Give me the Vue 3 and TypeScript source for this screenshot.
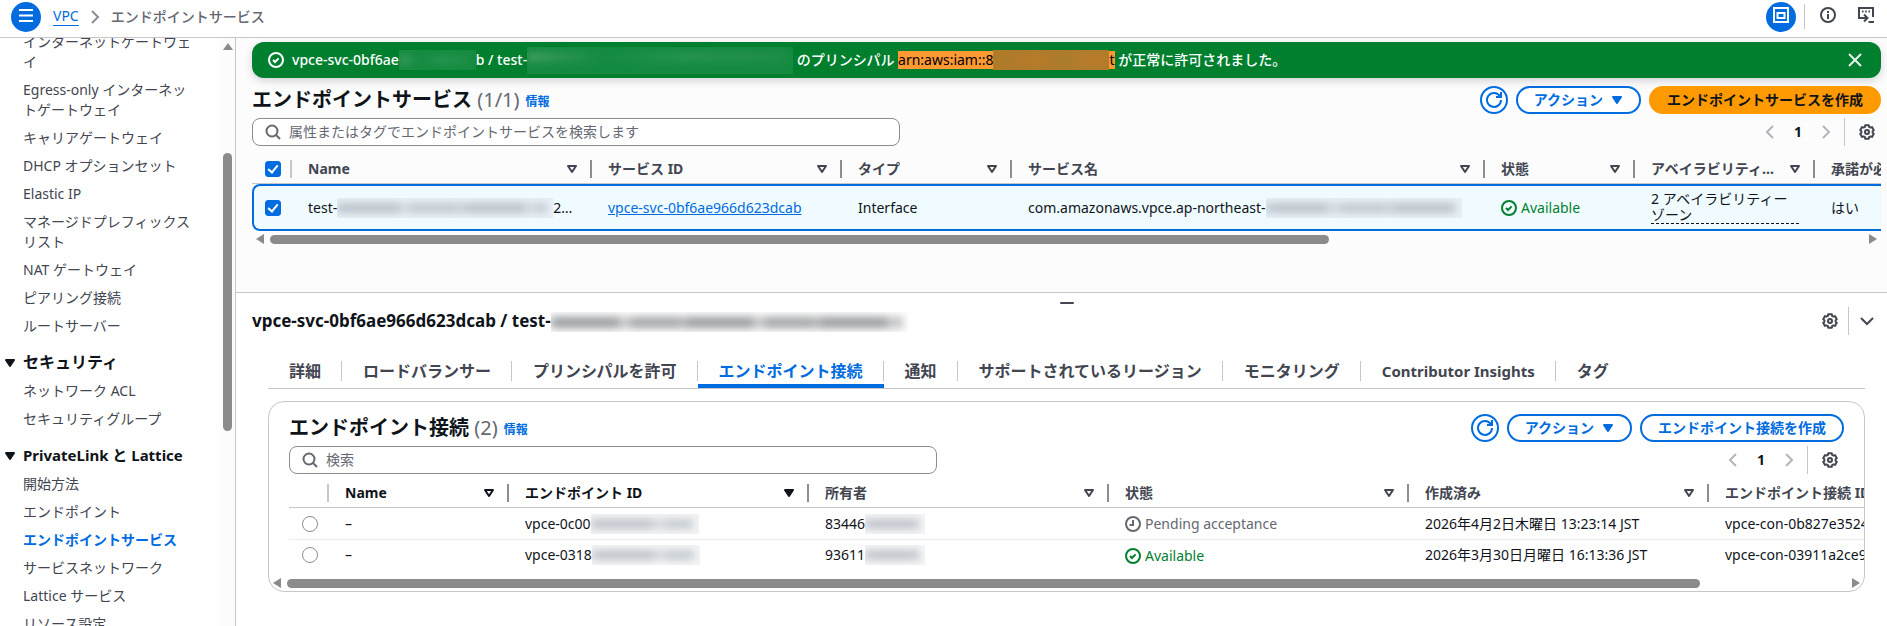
<script setup lang="ts">
import { h, ref } from 'vue'

type Shape = [string, Record<string, string>]

const icons: Record<string, Shape[]> = {
  menu: [['path', { d: 'M1 3h14M1 8.5h14M1 14h14' }]],
  chevronRight: [['path', { d: 'M5 2l6 6-6 6' }]],
  chevronLeft: [['path', { d: 'M11 2L5 8l6 6' }]],
  chevronDown: [['path', { d: 'M2 5l6 6 6-6' }]],
  search: [['circle', { cx: '7', cy: '7', r: '5.5' }], ['path', { d: 'M11 11l4 4' }]],
  check: [['circle', { cx: '8', cy: '8', r: '7' }], ['path', { d: 'M5 8l2 2 3.6-3.6' }]],
  pending: [['circle', { cx: '8', cy: '8', r: '7' }], ['path', { d: 'M8 4v5H4.5' }]],
  close: [['path', { d: 'M2 2l12 12M14 2L2 14' }]],
  refresh: [
    ['path', { d: 'M15 8a7 7 0 1 1-1.2-4' }],
    ['path', { d: 'M10 5h5V0' }],
  ],
  info: [['circle', { cx: '8', cy: '8', r: '7' }], ['path', { d: 'M8 12V7M8 6V4' }]],
  gear: [
    [
      'path',
      {
        'stroke-linejoin': 'round',
        d: 'M6.2 1.2H9.8L10.1 2.8 11.5 3.6 13 3.1 14.8 6.2 13.6 7.2V8.8L14.8 9.8 13 12.9 11.5 12.4 10.1 13.2 9.8 14.8H6.2L5.9 13.2 4.5 12.4 3 12.9 1.2 9.8 2.4 8.8V7.2L1.2 6.2 3 3.1 4.5 3.6 5.9 2.8Z',
      },
    ],
    ['circle', { cx: '8', cy: '8', r: '2' }],
  ],
  panel: [
    ['path', { d: 'M1 1h14v14H1z' }],
    ['path', { d: 'M4.500 6h7v5h-7z' }],
  ],
  shell: [
    ['path', { d: 'M4 11H1V1h14v9' }],
    ['path', { d: 'M4 4.500h1.500M7.200 4.500h1.600M10.500 4.500H12' }],
    ['path', { d: 'M3 11h6M6 7.500L9.500 11 6 14.500' }],
    ['path', { d: 'M10.500 15H16' }],
  ],
  sort: [['path', { d: 'M4 5h8l-4 6z', 'stroke-linejoin': 'round' }]],
  caret: [['path', { d: 'M4 5h8l-4 6z', 'stroke-linejoin': 'round', fill: 'currentColor' }]],
}

const Icon = (props: { name: string }) =>
  h(
    'svg',
    { class: 'icon', viewBox: '0 0 16 16', 'aria-hidden': 'true' },
    icons[props.name].map(([tag, attrs]) => h(tag, attrs)),
  )
Icon.props = ['name']

interface NavGroup {
  title?: string
  items: string[]
}

const nav: NavGroup[] = [
  {
    items: [
      'インターネットゲートウェイ',
      'Egress-only インターネットゲートウェイ',
      'キャリアゲートウェイ',
      'DHCP オプションセット',
      'Elastic IP',
      'マネージドプレフィックスリスト',
      'NAT ゲートウェイ',
      'ピアリング接続',
      'ルートサーバー',
    ],
  },
  { title: 'セキュリティ', items: ['ネットワーク ACL', 'セキュリティグループ'] },
  {
    title: 'PrivateLink と Lattice',
    items: [
      '開始方法',
      'エンドポイント',
      'エンドポイントサービス',
      'サービスネットワーク',
      'Lattice サービス',
      'リソース設定',
    ],
  },
]
const currentNav = 'エンドポイントサービス'

const serviceColumns = ['Name', 'サービス ID', 'タイプ', 'サービス名', '状態', 'アベイラビリティーゾーン', '承諾が必要']
const connectionColumns = ['Name', 'エンドポイント ID', '所有者', '状態', '作成済み', 'エンドポイント接続 ID']

const connections = [
  {
    id: 'vpce-0c00',
    owner: '83446',
    pending: true,
    state: 'Pending acceptance',
    created: '2026年4月2日木曜日 13:23:14 JST',
    connection: 'vpce-con-0b827e3524',
  },
  {
    id: 'vpce-0318',
    owner: '93611',
    pending: false,
    state: 'Available',
    created: '2026年3月30日月曜日 16:13:36 JST',
    connection: 'vpce-con-03911a2ce9',
  },
]

const tabs = [
  '詳細',
  'ロードバランサー',
  'プリンシパルを許可',
  'エンドポイント接続',
  '通知',
  'サポートされているリージョン',
  'モニタリング',
  'Contributor Insights',
  'タグ',
]
const isLatin = (text: string) => /^[A-Za-z]/.test(text)

const activeTab = ref('エンドポイント接続')
const allSelected = ref(true)
const rowSelected = ref(true)
const picked = ref('')
</script>

<template>
  <div class="app">
    <header class="topbar">
      <button class="round" aria-label="メニュー"><Icon name="menu" /></button>
      <nav class="crumbs" aria-label="パンくずリスト">
        <a href="#vpc">VPC</a>
        <Icon name="chevronRight" />
        <span>エンドポイントサービス</span>
      </nav>
      <div class="tools">
        <button class="round" aria-label="分割パネル"><Icon name="panel" /></button>
        <span class="rule"></span>
        <button class="bare" aria-label="情報パネル"><Icon name="info" /></button>
        <button class="bare" aria-label="CloudShell"><Icon name="shell" /></button>
      </div>
    </header>

    <div class="body">
      <aside class="side">
        <nav class="links">
          <section v-for="(group, i) in nav" :key="i">
            <h2 v-if="group.title" :class="{ latin: isLatin(group.title) }"><Icon name="caret" />{{ group.title }}</h2>
            <ul>
              <li v-for="item in group.items" :key="item">
                <a href="#nav" :class="{ current: item === currentNav }">{{ item }}</a>
              </li>
            </ul>
          </section>
        </nav>
        <div class="vbar" aria-hidden="true">
          <i class="up"></i>
          <i class="thumb"></i>
        </div>
      </aside>

      <main class="main">
        <section class="upper">
          <div class="flash" role="status">
            <Icon name="check" />
            <p>
              <span>vpce-svc-0bf6ae</span><i class="mask green w-id"></i><span>b / test-</span
              ><i class="mask green w-name"></i><span class="pre"> のプリンシパル </span
              ><mark>arn:aws:iam::8</mark><i class="mask orange w-arn"></i><mark>t</mark
              ><span class="pre"> が正常に許可されました。</span>
            </p>
            <button class="bare" aria-label="閉じる"><Icon name="close" /></button>
          </div>

          <div class="heading">
            <h1>エンドポイントサービス <small>(1/1)</small></h1>
            <a class="info" href="#info">情報</a>
            <div class="actions">
              <button class="btn circle" aria-label="更新"><Icon name="refresh" /></button>
              <button class="btn menu">アクション<Icon name="caret" /></button>
              <button class="btn primary">エンドポイントサービスを作成</button>
            </div>
          </div>

          <div class="filter">
            <label class="search">
              <Icon name="search" />
              <input type="search" placeholder="属性またはタグでエンドポイントサービスを検索します" aria-label="エンドポイントサービスを検索" />
            </label>
            <div class="pager">
              <button class="bare dim" aria-label="前のページ"><Icon name="chevronLeft" /></button>
              <b>1</b>
              <button class="bare dim" aria-label="次のページ"><Icon name="chevronRight" /></button>
              <span class="rule"></span>
              <button class="bare" aria-label="設定"><Icon name="gear" /></button>
            </div>
          </div>

          <div class="scroller">
            <table class="services">
              <colgroup>
                <col class="c40" /><col class="c300" /><col class="c250" /><col class="c170" /><col class="c473" /><col
                  class="c150"
                /><col class="c180" /><col class="c170" />
              </colgroup>
              <thead>
                <tr>
                  <th class="pick"><input v-model="allSelected" type="checkbox" aria-label="すべて選択" /></th>
                  <th v-for="c in serviceColumns" :key="c">
                    <div class="th"><span>{{ c }}</span><Icon name="sort" /></div>
                  </th>
                </tr>
              </thead>
              <tbody>
                <tr>
                  <td class="pick"><input v-model="rowSelected" type="checkbox" aria-label="行を選択" /></td>
                  <td><div class="line"><span>test-</span><i class="mask w-svc"></i><span>2…</span></div></td>
                  <td><a href="#service">vpce-svc-0bf6ae966d623dcab</a></td>
                  <td>Interface</td>
                  <td>
                    <div class="line"><span>com.amazonaws.vpce.ap-northeast-</span><i class="mask w-dns"></i></div>
                  </td>
                  <td><span class="state ok"><Icon name="check" />Available</span></td>
                  <td><span class="zones">2 アベイラビリティーゾーン</span></td>
                  <td>はい</td>
                </tr>
              </tbody>
            </table>
          </div>
          <div class="hbar" aria-hidden="true">
            <i class="left"></i>
            <div class="track"><i class="thumb two-thirds"></i></div>
            <i class="right"></i>
          </div>
        </section>

        <section class="lower">
          <div class="grip"><i></i></div>
          <div class="panel-head">
            <h2>vpce-svc-0bf6ae966d623dcab / test-<i class="mask dark w-title"></i></h2>
            <div class="tools">
              <button class="bare" aria-label="パネル設定"><Icon name="gear" /></button>
              <span class="rule"></span>
              <button class="bare" aria-label="パネルを閉じる"><Icon name="chevronDown" /></button>
            </div>
          </div>

          <div class="panel-body">
            <div class="tabs" role="tablist">
              <button
                v-for="t in tabs"
                :key="t"
                role="tab"
                :aria-selected="t === activeTab"
                :class="{ active: t === activeTab, latin: isLatin(t) }"
                @click="activeTab = t"
              >
                <span>{{ t }}</span>
              </button>
            </div>

            <div class="card">
              <div class="card-top">
                <div class="heading">
                  <h2>エンドポイント接続 <small>(2)</small></h2>
                  <a class="info" href="#info">情報</a>
                  <div class="actions">
                    <button class="btn circle" aria-label="更新"><Icon name="refresh" /></button>
                    <button class="btn menu">アクション<Icon name="caret" /></button>
                    <button class="btn">エンドポイント接続を作成</button>
                  </div>
                </div>
                <div class="filter">
                  <label class="search">
                    <Icon name="search" />
                    <input type="search" placeholder="検索" aria-label="エンドポイント接続を検索" />
                  </label>
                  <div class="pager">
                    <button class="bare dim" aria-label="前のページ"><Icon name="chevronLeft" /></button>
                    <b>1</b>
                    <button class="bare dim" aria-label="次のページ"><Icon name="chevronRight" /></button>
                    <span class="rule"></span>
                    <button class="bare" aria-label="設定"><Icon name="gear" /></button>
                  </div>
                </div>
              </div>

              <div class="scroller inset">
                <table class="connections">
                  <colgroup>
                    <col class="c40" /><col class="c180" /><col v-for="n in 5" :key="n" class="c300" />
                  </colgroup>
                  <thead>
                    <tr>
                      <th class="pick"></th>
                      <th v-for="(c, i) in connectionColumns" :key="c" :class="{ sorted: i < 2 }">
                        <div class="th"><span>{{ c }}</span><Icon :name="i === 1 ? 'caret' : 'sort'" /></div>
                      </th>
                    </tr>
                  </thead>
                  <tbody>
                    <tr v-for="row in connections" :key="row.id">
                      <td class="pick">
                        <input v-model="picked" type="radio" name="connection" :value="row.id" :aria-label="row.id" />
                      </td>
                      <td>–</td>
                      <td><div class="line"><span>{{ row.id }}</span><i class="mask w-vpce"></i></div></td>
                      <td><div class="line"><span>{{ row.owner }}</span><i class="mask w-owner"></i></div></td>
                      <td>
                        <span class="state" :class="{ ok: !row.pending }"
                          ><Icon :name="row.pending ? 'pending' : 'check'" />{{ row.state }}</span
                        >
                      </td>
                      <td>{{ row.created }}</td>
                      <td>{{ row.connection }}</td>
                    </tr>
                  </tbody>
                </table>
              </div>
              <div class="hbar" aria-hidden="true">
                <i class="left"></i>
                <div class="track"><i class="thumb most"></i></div>
                <i class="right"></i>
              </div>
            </div>
          </div>
        </section>
      </main>
    </div>
  </div>
</template>

<style>
body {
  margin: 0;
  overflow: hidden;
}
</style>

<style scoped>
.app {
  --blue: #006ce0;
  --line: #c6c6cd;
  --muted: #656871;
  --text: #0f141a;
  --dark: #424650;
  display: flex;
  flex-direction: column;
  height: 100vh;
  background: #fff;
  color: var(--text);
  font: 14px/20px 'Noto Sans', 'Noto Sans CJK JP', sans-serif;
}
.app *,
.app *::before {
  box-sizing: border-box;
}
h1,
h2,
p,
ul {
  margin: 0;
  padding: 0;
}
ul {
  list-style: none;
}
a {
  color: var(--blue);
}
button,
input {
  font: inherit;
  color: inherit;
  margin: 0;
}
button {
  padding: 0;
  border: 0;
  background: none;
}
.icon {
  flex: none;
  display: block;
  width: 16px;
  height: 16px;
  fill: none;
  stroke: currentColor;
  stroke-width: 2;
  overflow: visible;
}
.rule {
  width: 1px;
  align-self: stretch;
  background: var(--line);
}
.bare {
  color: var(--dark);
}

/* top bar */
.topbar {
  flex: none;
  display: flex;
  align-items: center;
  height: 38px;
  padding: 0 13px 4px 11px;
  border-bottom: 1px solid var(--line);
}
.round {
  display: grid;
  place-items: center;
  width: 30px;
  height: 30px;
  padding-bottom: 4px;
  border-radius: 50%;
  background: var(--blue);
  color: #fff;
}
.crumbs {
  display: flex;
  align-items: center;
  gap: 8px;
  margin-left: 12px;
  color: var(--muted);
  font-weight: 500;
}
.crumbs a {
  line-height: 18px;
  font-weight: 400;
  text-decoration: none;
  border-bottom: 1px solid var(--blue);
}
.crumbs .icon {
  color: #8c8c94;
}
.topbar .tools {
  display: flex;
  align-items: center;
  margin-left: auto;
}
.topbar .rule {
  height: 25px;
  align-self: center;
  margin: 0 15px 0 8px;
}
.topbar .bare {
  padding-bottom: 4px;
}
.topbar .bare + .bare {
  margin-left: 22px;
}

.body {
  flex: 1;
  display: flex;
  min-height: 0;
}

/* side navigation */
.side {
  flex: none;
  display: flex;
  justify-content: space-between;
  width: 236px;
  border-right: 1px solid var(--line);
  overflow: hidden;
}
.links {
  width: 195px;
  margin-top: -6px;
}
.links li {
  padding-left: 23px;
  margin-bottom: 8px;
}
.links a {
  display: block;
  color: var(--dark);
  text-decoration: none;
  line-break: anywhere;
}
.links a.current {
  color: var(--blue);
  font-weight: 700;
}
.links h2 {
  display: flex;
  align-items: center;
  gap: 5px;
  padding: 8px 0 8px 2px;
  font-size: 16px;
  line-height: 21px;
}
.links h2.latin {
  font-size: 15px;
}
.vbar {
  display: flex;
  flex-direction: column;
  align-items: center;
  width: 15px;
  padding-top: 5px;
  background: #fcfcfc;
}
.vbar .up {
  border: 5px solid transparent;
  border-top: 0;
  border-bottom: 7px solid #8b8b8b;
}
.vbar .thumb {
  width: 9px;
  height: 278px;
  margin-top: 103px;
  border-radius: 5px;
  background: #8b8b8b;
}

/* main */
.main {
  flex: 1;
  min-width: 0;
  display: flex;
  flex-direction: column;
}
.upper {
  flex: 1;
  padding: 4px 6px 0 16px;
  background: #fcfcfd;
}
.flash {
  display: flex;
  align-items: center;
  gap: 8px;
  height: 36px;
  padding: 0 18px 0 16px;
  border-radius: 12px;
  background: #00802f;
  box-shadow: 0 3px 8px rgba(0, 7, 22, 0.16);
  color: #fff;
}
.flash p {
  flex: 1;
  display: flex;
  align-items: center;
  font-weight: 500;
}
.flash .bare {
  color: #e6f2ea;
}
.flash mark {
  line-height: 18px;
  background: #ff9933;
  color: #000;
  font-weight: 400;
}
.pre {
  white-space: pre;
}
.heading {
  display: flex;
  align-items: center;
  height: 28px;
}
.upper .heading {
  margin-top: 8px;
}
.heading h1,
.heading h2 {
  font-size: 20px;
  line-height: 24px;
}
.heading small {
  font-size: 20px;
  font-weight: 400;
  color: var(--muted);
}
.info {
  margin: 4px 0 0 6px;
  font-size: 12px;
  font-weight: 700;
  text-decoration: none;
}
.actions {
  display: flex;
  gap: 8px;
  margin-left: auto;
}
.btn {
  display: flex;
  align-items: center;
  gap: 6px;
  height: 28px;
  padding: 0 16px;
  border: 2px solid var(--blue);
  border-radius: 14px;
  background: #fff;
  color: var(--blue);
  font-weight: 700;
}
.btn.menu {
  padding-right: 14px;
}
.btn.circle {
  width: 28px;
  padding: 0;
  justify-content: center;
}
.btn.primary {
  border-color: #ff9900;
  background: #ff9900;
  color: var(--text);
}
.filter {
  display: flex;
  justify-content: space-between;
  height: 28px;
  margin-top: 4px;
}
.search {
  display: flex;
  align-items: center;
  gap: 8px;
  width: 648px;
  padding: 0 12px;
  border: 1px solid #8c8c94;
  border-radius: 8px;
  background: #fff;
  color: var(--muted);
}
.search input {
  flex: 1;
  min-width: 0;
  padding: 0;
  border: 0;
  outline: 0;
  background: none;
}
.search input::placeholder {
  color: var(--muted);
  opacity: 1;
}
.pager {
  display: flex;
  align-items: center;
  padding-right: 6px;
}
.pager b {
  width: 40px;
  text-align: center;
}
.pager .dim {
  color: #b4b4bb;
}
.pager .rule {
  margin: 0 14px 0 10px;
}

/* tables */
.scroller {
  overflow: hidden;
}
table {
  table-layout: fixed;
  width: 0;
  border-collapse: separate;
  border-spacing: 0;
}
.c40 {
  width: 40px;
}
.c150 {
  width: 150px;
}
.c170 {
  width: 170px;
}
.c180 {
  width: 180px;
}
.c250 {
  width: 250px;
}
.c300 {
  width: 300px;
}
.c473 {
  width: 473px;
}
th,
td {
  padding: 0 0 0 16px;
  text-align: left;
  white-space: nowrap;
}
th {
  height: 34px;
  padding-top: 4px;
  color: var(--dark);
  border-bottom: 1px solid var(--line);
}
.th {
  display: flex;
  align-items: center;
  justify-content: space-between;
  height: 20px;
  padding-right: 12px;
  background: linear-gradient(#8c8c94, #8c8c94) right center / 2px 18px no-repeat;
}
th.pick {
  background: linear-gradient(var(--line), var(--line)) right 10px / 2px 18px no-repeat;
}
.th span {
  overflow: hidden;
  text-overflow: ellipsis;
}
.th .icon {
  margin-left: 8px;
}
.pick {
  padding-left: 13px;
}
.pick input {
  display: block;
  width: 16px;
  height: 16px;
}
input[type='checkbox'] {
  appearance: none;
  border: 1px solid #8c8c94;
  border-radius: 3px;
  display: grid;
  place-items: center;
}
input[type='checkbox']:checked {
  border-color: var(--blue);
  background: var(--blue);
}
input[type='checkbox']:checked::before {
  content: '';
  width: 6px;
  height: 10px;
  margin-bottom: 2px;
  border: solid #fff;
  border-width: 0 2px 2px 0;
  rotate: 40deg;
}
input[type='radio'] {
  appearance: none;
  border: 1px solid #8c8c94;
  border-radius: 50%;
  background: #fff;
}
input[type='radio']:checked {
  border: 5px solid var(--blue);
}
.services th {
  height: 38px;
  padding-top: 8px;
}
.services th.pick {
  background-position: right 14px;
}
.services td {
  height: 47px;
  border: solid var(--blue);
  border-width: 2px 0;
  background: #f0fbff;
}
.services td.pick {
  padding-left: 11px;
  border-left-width: 2px;
  border-radius: 8px 0 0 8px;
}
.connections .sorted {
  color: var(--text);
}
.connections td {
  height: 32px;
  border-bottom: 1px solid #ebebf0;
}
.connections tr:last-child td {
  height: 31px;
  border-bottom-color: transparent;
}
.line {
  display: flex;
  align-items: center;
}
.state {
  display: inline-flex;
  align-items: center;
  gap: 4px;
  color: var(--muted);
  vertical-align: middle;
}
.state.ok {
  color: #00802f;
}
.zones {
  display: inline-block;
  width: 148px;
  line-height: 16px;
  white-space: normal;
  line-break: anywhere;
  vertical-align: middle;
  border-bottom: 1px dashed var(--text);
}

/* scroll bars */
.hbar {
  display: flex;
  align-items: center;
  gap: 6px;
  padding: 3px 4px;
}
.hbar .left,
.hbar .right {
  border: 5px solid transparent;
}
.hbar .left {
  border-left: 0;
  border-right: 8px solid #8b8b8b;
}
.hbar .right {
  border-right: 0;
  border-left: 8px solid #8b8b8b;
}
.hbar .track {
  flex: 1;
}
.hbar .thumb {
  display: block;
  height: 9px;
  border-radius: 5px;
  background: #8b8b8b;
}
.two-thirds {
  width: calc(66% + 8px);
}
.most {
  width: calc(91% - 6px);
}

/* blurred values */
.mask {
  flex: none;
  display: inline-block;
  height: 20px;
  overflow: hidden;
  vertical-align: middle;
  background: rgba(120, 126, 140, 0.08);
}
.mask::before {
  content: '';
  display: block;
  height: 8px;
  margin: 6px 6px 6px 0;
  filter: blur(4px);
  background: repeating-linear-gradient(90deg, #b4b9c1 0 60px, #d2d6db 66px 70px, #bcc1c8 76px 120px, #d6d9de 126px);
}
.mask.dark {
  background: #fdfdfd;
}
.mask.dark::before {
  height: 11px;
  margin-top: 5px;
  background: repeating-linear-gradient(90deg, #96989c 0 66px, #c9cacc 72px 76px, #9fa1a5 82px 128px, #c9cacc 134px);
}
.mask.green {
  background: #148a40;
}
.mask.green::before {
  background: linear-gradient(90deg, #4ba466, #148a40 30%, #2c9852 60%, #228f49);
}
.mask.orange {
  background: #b07c2b;
}
.mask.orange::before {
  background: linear-gradient(90deg, #a67a2b, #bf7a29 40%, #a67c30 60%, #c47c2b);
}
.w-id {
  width: 77px;
}
.w-name {
  width: 266px;
  height: 27px;
}
.w-arn {
  width: 116px;
}
.w-svc {
  width: 216px;
}
.w-dns {
  width: 196px;
}
.w-title {
  width: 357px;
}
.w-vpce {
  width: 108px;
}
.w-owner {
  width: 60px;
}

/* split panel */
.lower {
  flex: none;
  padding: 0 6px 34px 16px;
  border-top: 1px solid var(--line);
}
.grip {
  display: flex;
  justify-content: center;
  padding-top: 9px;
}
.grip i {
  width: 14px;
  height: 2px;
  border-radius: 1px;
  background: var(--dark);
}
.panel-head {
  display: flex;
  justify-content: space-between;
  height: 28px;
  margin-top: 3px;
}
.panel-head h2 {
  font-size: 17px;
  line-height: 28px;
}
.panel-head .tools {
  display: flex;
  align-items: center;
  gap: 10px;
  padding-right: 6px;
}
.panel-body {
  padding: 0 16px;
}
.tabs {
  display: flex;
  height: 54px;
  padding-top: 18px;
  border-bottom: 1px solid var(--line);
}
.tabs button {
  display: flex;
  align-items: center;
  color: var(--dark);
  font-size: 16px;
  font-weight: 700;
}
.tabs button.latin {
  font-size: 15px;
}
.tabs span {
  padding: 0 20px 0 21px;
  border-right: 1px solid var(--line);
}
.tabs button:last-child span {
  border-right: 0;
}
.tabs .active {
  color: var(--blue);
  background: linear-gradient(var(--blue), var(--blue)) bottom / 100% 4px no-repeat;
}
.card {
  margin-top: 12px;
  border: 1px solid var(--line);
  border-radius: 16px;
  overflow: hidden;
}
.card-top {
  padding: 12px 20px 0;
}
.inset {
  margin-left: 20px;
}
.card .hbar {
  margin-top: 4px;
}
</style>
